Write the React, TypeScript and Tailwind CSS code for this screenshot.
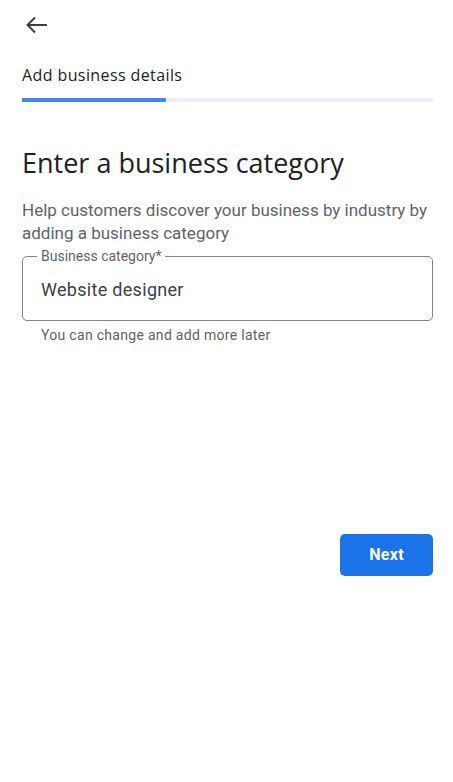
import React from "react";

export default function App() {
  return (
    <div className="w-[453px] h-[782px] bg-white relative" style={{ fontFamily: "Roboto, 'Liberation Sans', sans-serif" }}>
      <div className="pl-[22px] pr-[20px]">
        <div className="pt-[15px] h-[50px]">
          <svg width="24" height="20" viewBox="0 0 24 20" className="ml-[3px]" fill="none" stroke="#3c4043" strokeWidth="2">
            <path d="M2.5 10H22" />
            <path d="M10 2.5L2.5 10L10 17.5" />
          </svg>
        </div>
        <div className="pt-[15px] text-[16px] leading-[20px] font-medium tracking-[0.4px] text-[#202124]" style={{ fontFamily: "'Open Sans', sans-serif" }}>
          Add business details
        </div>
        <div className="mt-[13px] h-[4px] bg-[#e8f0fe] flex">
          <div className="w-[144px] h-full bg-[#4285f4] rounded-r-[1px]" />
        </div>
        <h1 className="mt-[44px] text-[27px] leading-[34px] text-[#202124]" style={{ fontFamily: "'Open Sans', sans-serif" }}>
          Enter a business category
        </h1>
        <p className="mt-[19px] text-[17px] leading-[23px] text-[#5f6368]">
          Help customers discover your business by industry by adding a business category
        </p>
        <div className="mt-[11px] relative border border-[#80868b] rounded-[5px] h-[65px] flex items-center px-[18px]">
          <span className="absolute left-[14px] top-[-9px] bg-white px-[4px] text-[14px] leading-[16px] text-[#5f6368]">
            Business category*
          </span>
          <span className="text-[18px] tracking-[0.3px] text-[#3c4043] mt-[1px]">Website designer</span>
        </div>
        <div className="mt-[6px] pl-[19px] text-[14px] leading-[16px] tracking-[0.3px] text-[#5f6368]">
          You can change and add more later
        </div>
        <div className="mt-[191px] flex justify-end">
          <button className="w-[93px] h-[42px] bg-[#1a73e8] rounded-[5px] text-white text-[16px] tracking-[0.3px] font-bold">
            Next
          </button>
        </div>
      </div>
    </div>
  );
}
